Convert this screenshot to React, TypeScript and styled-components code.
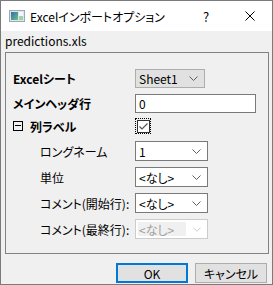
import type { FC } from 'react'
import styled, { createGlobalStyle } from 'styled-components'

const GlobalStyle = createGlobalStyle`
  html, body {
    margin: 0;
    padding: 0;
    background: #f0f0f0;
  }
  body {
    font-family: "Noto Sans CJK JP", "Noto Sans", sans-serif;
    font-size: 12px;
    color: #000;
  }
`

const Chevron: FC<{ color?: string }> = ({ color = '#606060' }) => (
  <svg width="9" height="5" viewBox="0 0 9 5">
    <path d="M0.5 0.5 L4.5 4.5 L8.5 0.5" fill="none" stroke={color} strokeWidth="1" />
  </svg>
)

const AppIcon = () => (
  <svg width="16" height="12" viewBox="0 0 16 12">
    <defs>
      <linearGradient id="ig" x1="0" y1="0" x2="1" y2="1">
        <stop offset="0" stopColor="#2d6fa8" />
        <stop offset="1" stopColor="#6fbf8a" />
      </linearGradient>
    </defs>
    <rect x="0.5" y="0.5" width="15" height="11" fill="#dfe6ee" stroke="#9aa7b4" />
    <rect x="2" y="2" width="7" height="8" fill="url(#ig)" />
    <rect x="10" y="2" width="4" height="8" fill="#f4f7f9" />
    <rect x="10" y="6" width="4" height="4" fill="#9fd3a4" />
  </svg>
)

const CloseIcon = () => (
  <svg width="10" height="10" viewBox="0 0 10 10">
    <path d="M0.5 0.5 L9.5 9.5 M9.5 0.5 L0.5 9.5" stroke="#000" strokeWidth="1" />
  </svg>
)

const App: FC = () => (
  <>
    <GlobalStyle />
    <Window>
      <TitleBar>
        <IconWrap>
          <AppIcon />
        </IconWrap>
        <Title>Excelインポートオプション</Title>
        <HelpButton>?</HelpButton>
        <CloseButton>
          <CloseIcon />
        </CloseButton>
      </TitleBar>
      <FileName>predictions.xls</FileName>
      <GroupBox>
        <Row $h={19} $mt={16}>
          <Label $bold>Excelシート</Label>
          <Combo $w={70} $flat>
            <ComboText>Sheet1</ComboText>
            <Chevron />
          </Combo>
        </Row>
        <Row $h={19} $mt={6}>
          <Label $bold>メインヘッダ行</Label>
          <TextInput>0</TextInput>
        </Row>
        <Row $h={16} $mt={5}>
          <Label $bold>
            <Collapse />
            列ラベル
          </Label>
          <FocusRect>
            <CheckBox>
              <svg width="11" height="11" viewBox="0 0 11 11">
                <path d="M1.5 5.5 L4 8 L9.5 2.5" fill="none" stroke="#555" strokeWidth="1.2" />
              </svg>
            </CheckBox>
          </FocusRect>
        </Row>
        <Row $h={20} $mt={7}>
          <Label $indent>ロングネーム</Label>
          <Combo $w={73}>
            <ComboText>1</ComboText>
            <Chevron />
          </Combo>
        </Row>
        <Row $h={20} $mt={6}>
          <Label $indent>単位</Label>
          <Combo $w={73}>
            <ComboText>&lt;なし&gt;</ComboText>
            <Chevron />
          </Combo>
        </Row>
        <Row $h={20} $mt={6}>
          <Label $indent>コメント(開始行):</Label>
          <Combo $w={73}>
            <ComboText>&lt;なし&gt;</ComboText>
            <Chevron />
          </Combo>
        </Row>
        <Row $h={20} $mt={6}>
          <Label $indent>コメント(最終行):</Label>
          <DisabledCombo>
            <DisabledText>&lt;なし&gt;</DisabledText>
            <Chevron color="#c8c8c8" />
          </DisabledCombo>
        </Row>
      </GroupBox>
      <ButtonBar>
        <Button $default>OK</Button>
        <Button>キャンセル</Button>
      </ButtonBar>
    </Window>
  </>
)

const Window = styled.div`
  width: 273px;
  height: 285px;
  box-sizing: border-box;
  border: 1px solid #7a7a7a;
  background: #f0f0f0;
  display: flex;
  flex-direction: column;
`

const TitleBar = styled.div`
  height: 30px;
  background: #fff;
  display: flex;
  align-items: center;
  flex-shrink: 0;
`

const IconWrap = styled.div`
  width: 16px;
  height: 12px;
  margin-left: 8px;
  margin-right: 5px;
  display: flex;
`

const Title = styled.div`
  flex: 1;
  font-size: 12px;
  font-feature-settings: "palt";
  white-space: nowrap;
`

const HelpButton = styled.div`
  width: 20px;
  font-size: 13px;
  text-align: center;
  margin-right: 29px;
`

const CloseButton = styled.div`
  width: 10px;
  height: 10px;
  display: flex;
  margin-right: 17px;
`

const FileName = styled.div`
  height: 21px;
  line-height: 20px;
  padding-left: 4px;
  font-size: 12px;
  flex-shrink: 0;
`

const GroupBox = styled.div`
  height: 202px;
  margin: 0 3px 0 4px;
  box-sizing: border-box;
  border: 1px solid #828282;
  padding-left: 7px;
  display: flex;
  flex-direction: column;
`

const Row = styled.div<{ $h: number; $mt: number }>`
  height: ${(p) => p.$h}px;
  margin-top: ${(p) => p.$mt}px;
  display: flex;
  align-items: center;
`

const Label = styled.div<{ $bold?: boolean; $indent?: boolean }>`
  width: ${(p) => (p.$indent ? 95 : 122)}px;
  padding-left: ${(p) => (p.$indent ? 27 : 0)}px;
  font-weight: ${(p) => (p.$bold ? 700 : 400)};
  font-size: 12px;
  font-feature-settings: "palt";
  white-space: nowrap;
  display: flex;
  align-items: center;
`

const Collapse = styled.span`
  position: relative;
  width: 10px;
  height: 10px;
  box-sizing: border-box;
  border: 1px solid #000;
  margin-right: 7px;
  flex-shrink: 0;

  &::after {
    content: '';
    position: absolute;
    left: 1px;
    right: 1px;
    top: 3px;
    height: 1px;
    background: #000;
  }
`

const Combo = styled.div<{ $w: number; $flat?: boolean }>`
  width: ${(p) => p.$w}px;
  height: 100%;
  box-sizing: border-box;
  border: 1px solid ${(p) => (p.$flat ? '#adadad' : '#7a7a7a')};
  background: ${(p) => (p.$flat ? '#e1e1e1' : '#fff')};
  display: flex;
  align-items: center;
  padding: 0 6px 0 3px;
`

const ComboText = styled.div`
  flex: 1;
  font-size: 12px;
  font-feature-settings: "palt";
`

const DisabledCombo = styled.div`
  width: 73px;
  height: 100%;
  box-sizing: border-box;
  border: 1px solid #cccccc;
  background: #fff;
  display: flex;
  align-items: center;
  padding: 2px 6px 2px 2px;
`

const DisabledText = styled.div`
  width: 53px;
  height: 100%;
  background: #f0f0f0;
  color: #a0a0a0;
  font-size: 12px;
  font-feature-settings: "palt";
  display: flex;
  align-items: center;
  padding-left: 1px;
  margin-right: 7px;
`

const TextInput = styled.div`
  width: 121px;
  height: 100%;
  box-sizing: border-box;
  border: 1px solid #7a7a7a;
  background: #fff;
  display: flex;
  align-items: center;
  padding-left: 3px;
  font-size: 12px;
`

const FocusRect = styled.div`
  width: 16px;
  height: 16px;
  box-sizing: border-box;
  border: 1px dotted #000;
  display: flex;
  align-items: center;
  justify-content: center;
`

const CheckBox = styled.div`
  width: 13px;
  height: 13px;
  box-sizing: border-box;
  border: 1px solid #333;
  background: #fff;
  display: flex;
  align-items: center;
  justify-content: center;
`

const ButtonBar = styled.div`
  display: flex;
  justify-content: flex-end;
  gap: 7px;
  margin-top: 9px;
  padding-right: 5px;
`

const Button = styled.div<{ $default?: boolean }>`
  width: 72px;
  height: 20px;
  box-sizing: border-box;
  border: ${(p) => (p.$default ? '2px solid #0078d7' : '1px solid #adadad')};
  background: #e1e1e1;
  display: flex;
  align-items: center;
  justify-content: center;
  font-size: 12px;
  font-feature-settings: "palt";
`

export default App
